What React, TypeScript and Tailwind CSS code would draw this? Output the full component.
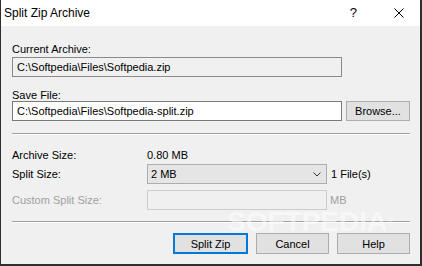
import React from "react";

export default function App() {
  return (
    <div className="w-[422px] h-[266px] relative flex flex-col bg-[#f0f0f0] border-l border-r-2 border-b-2 border-[#2e2e2e] font-['Liberation_Sans',Arial,sans-serif] text-[11px] text-black overflow-hidden">
      {/* Title bar */}
      <div className="h-[26px] shrink-0 bg-white flex items-center pl-[3px]">
        <span className="text-[12px] leading-[14px]">Split Zip Archive</span>
        <div className="ml-auto mr-[16px] flex items-center">
          <span className="text-[13px] leading-[14px]">?</span>
          <svg className="ml-[37px]" width="10" height="10" viewBox="0 0 10 10">
            <path d="M0.5 0.5 L9.5 9.5 M9.5 0.5 L0.5 9.5" stroke="#000" strokeWidth="1" fill="none" />
          </svg>
        </div>
      </div>

      {/* Client */}
      <div className="flex-1 flex flex-col pl-[11px] pr-[10px] pt-[17px]">
        <div className="h-[12px] leading-[12px]">Current Archive:</div>
        <div className="mt-[2px] h-[20px] w-[330px] border border-[#8a8a8a] bg-[#f0f0f0] flex items-center pl-[4px] leading-[12px]">
          C:\Softpedia\Files\Softpedia.zip
        </div>

        <div className="mt-[12px] h-[12px] leading-[12px]">Save File:</div>
        <div className="flex gap-[4px]">
          <div className="h-[20px] w-[330px] border border-[#7a7a7a] bg-white flex items-center pl-[4px] leading-[12px]">
            C:\Softpedia\Files\Softpedia-split.zip
          </div>
          <button className="h-[20px] w-[64px] border border-[#adadad] bg-[#e1e1e1] flex items-center justify-center leading-[12px]">
            Browse...
          </button>
        </div>

        <div className="mt-[12px] h-[2px] border-t border-[#a0a0a0] border-b border-b-white" />

        <div className="mt-[14px] grid grid-cols-[135px_1fr] items-center">
          <div className="h-[12px] leading-[12px]">Archive Size:</div>
          <div className="h-[12px] leading-[12px]">0.80 MB</div>
        </div>

        <div className="mt-[3px] grid grid-cols-[135px_1fr] items-center">
          <div className="leading-[12px]">Split Size:</div>
          <div className="flex items-center">
            <div className="h-[20px] w-[180px] border border-[#adadad] bg-[#e5e5e5] flex items-center pl-[3px] pr-[5px] leading-[12px]">
              <span>2 MB</span>
              <svg className="ml-auto" width="8" height="5" viewBox="0 0 8 5">
                <path d="M0.5 0.5 L4 4 L7.5 0.5" stroke="#333" strokeWidth="1" fill="none" />
              </svg>
            </div>
            <span className="ml-[4px] leading-[12px]">1 File(s)</span>
          </div>
        </div>

        <div className="mt-[6px] grid grid-cols-[135px_1fr] items-center text-[#a0a0a0]">
          <div className="leading-[12px]">Custom Split Size:</div>
          <div className="flex items-center">
            <div className="h-[20px] w-[180px] border border-[#cccccc] bg-[#f0f0f0]" />
            <span className="ml-[3px] leading-[12px]">MB</span>
          </div>
        </div>

        <div className="mt-[11px] h-[2px] border-t border-[#a0a0a0] border-b border-b-white" />

        <div className="mt-[10px] flex justify-end gap-[8px]">
          <button className="h-[21px] w-[75px] border-2 border-[#0078d7] bg-[#e1e1e1] flex items-center justify-center leading-[12px]">
            Split Zip
          </button>
          <button className="h-[21px] w-[73px] border border-[#adadad] bg-[#e1e1e1] flex items-center justify-center leading-[12px]">
            Cancel
          </button>
          <button className="h-[21px] w-[73px] border border-[#adadad] bg-[#e1e1e1] flex items-center justify-center leading-[12px]">
            Help
          </button>
        </div>
      </div>

      {/* Watermark */}
      <div className="absolute left-[226px] top-[208px] text-[28px] leading-[28px] font-bold text-white/50 pointer-events-none select-none">
        SOFTPEDIA<span className="text-[9px] align-top font-normal">®</span>
      </div>
    </div>
  );
}
